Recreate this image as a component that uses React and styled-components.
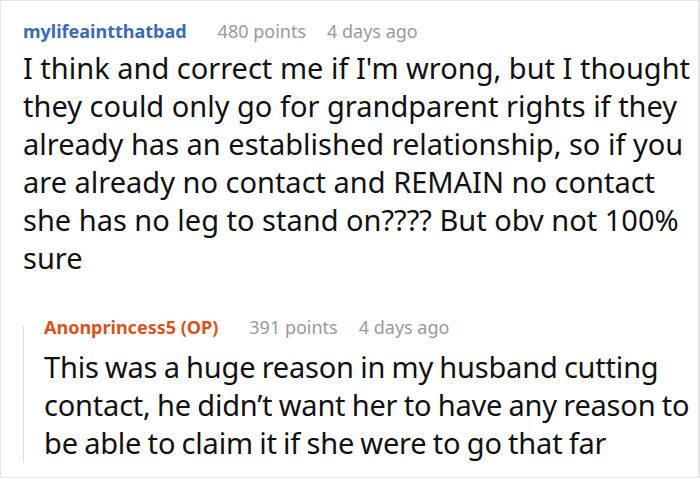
import styled, { createGlobalStyle } from "styled-components";

const GlobalStyle = createGlobalStyle`
  html, body {
    margin: 0;
    padding: 0;
    background: #fff;
    overflow: hidden;
  }
  body {
    font-family: "Noto Sans", "Open Sans", sans-serif;
  }
`;

const Frame = styled.div`
  box-sizing: border-box;
  width: 700px;
  height: 478px;
  overflow: hidden;
  border: 1px solid #e6e6e6;
  border-right-width: 2px;
  background: #fff;
  padding: 18px 0 0 22px;
`;

const Comment = styled.div`
  display: flex;
  flex-direction: column;
`;

const Meta = styled.div`
  display: flex;
  align-items: baseline;
  font-size: 18px;
  line-height: 24px;
`;

const Author = styled.span`
  font-weight: 700;
  color: ${(p) => (p.$op ? "#d9531e" : "#3a6ab8")};
  margin-right: 31px;
`;

const Info = styled.span`
  color: #999;
  & + & {
    margin-left: 21px;
  }
`;

const Body = styled.p`
  margin: ${(p) => (p.$nested ? "9px" : "6px")} 0 0;
  font-size: 29px;
  line-height: 38px;
  color: #111;
  letter-spacing: ${(p) => (p.$nested ? "-0.2px" : "normal")};
  word-spacing: ${(p) => (p.$nested ? "-1px" : "normal")};
`;

const Replies = styled.div`
  position: relative;
  margin-top: 38px;
  padding-left: 21px;

  &::before {
    content: "";
    position: absolute;
    left: 0;
    top: 11px;
    bottom: 0;
    width: 1px;
    background: #dedede;
  }
`;

const Reply = ({ author, op, nested, points, age, text }) => (
  <Comment>
    <Meta>
      <Author $op={op}>{author}</Author>
      <Info>{points} points</Info>
      <Info>{age}</Info>
    </Meta>
    <Body $nested={nested}>{text}</Body>
  </Comment>
);

export default function App() {
  return (
    <>
      <GlobalStyle />
      <Frame>
        <Reply
          author="mylifeaintthatbad"
          points={480}
          age="4 days ago"
          text="I think and correct me if I'm wrong, but I thought they could only go for grandparent rights if they already has an established relationship, so if you are already no contact and REMAIN no contact she has no leg to stand on???? But obv not 100% sure"
        />
        <Replies>
          <Reply
            author="Anonprincess5 (OP)"
            op
            nested
            points={391}
            age="4 days ago"
            text="This was a huge reason in my husband cutting contact, he didn’t want her to have any reason to be able to claim it if she were to go that far"
          />
        </Replies>
      </Frame>
    </>
  );
}
